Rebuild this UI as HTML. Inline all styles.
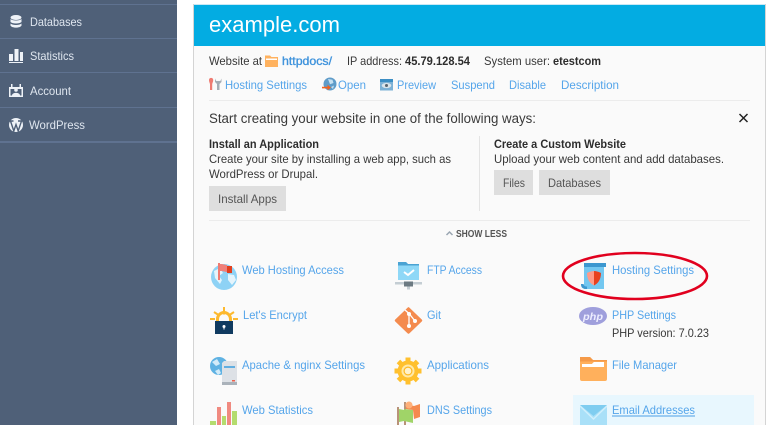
<!DOCTYPE html>
<html><head><meta charset="utf-8"><style>
html,body{margin:0;padding:0;background:#fff;width:774px;height:425px;overflow:hidden}
svg{display:block}
text{font-family:"Liberation Sans",Arial,sans-serif;font-size:12px}
.s{fill:#dfe6ef}
.b{fill:#383838}
.l{fill:#55a5ea}
.h{font-weight:bold;fill:#2d2d2d;font-size:11.5px}
.g{fill:#555}
</style></head><body>
<svg width="774" height="425" viewBox="0 0 774 425" xmlns="http://www.w3.org/2000/svg">
<rect x="0" y="0" width="177" height="425" fill="#4f6078"/>
<g fill="#5f7290"><rect y="4" width="177" height="1"/><rect y="38" width="177" height="1"/><rect y="72" width="177" height="1"/><rect y="107" width="177" height="1"/><rect y="141" width="177" height="2"/></g>
<!-- sidebar icons -->
<g fill="#eef2f7">
<ellipse cx="16" cy="17.500" rx="5.500" ry="2.500"/><path d="M10.500 19c2 2 9 2 11 0v3c-2 2-9 2-11 0z"/><path d="M10.500 23.500c2 2 9 2 11 0v2c-1 2.800-10 2.800-11 0z"/>
<rect x="9" y="54" width="4" height="7"/><rect x="14.500" y="49" width="4" height="12"/><rect x="20" y="52" width="3" height="9"/><rect x="9" y="62" width="14" height="1"/>
<path fill-rule="evenodd" d="M9 87h14v10H9zM10.500 89v6.500h11V89z"/><rect x="11" y="84" width="1.500" height="4"/><rect x="19.500" y="84" width="1.500" height="4"/><circle cx="16" cy="90" r="1.800"/><path d="M12 95.500c0-3.500 8-3.500 8 0z"/>
</g>
<circle cx="16" cy="125" r="7" fill="#eef2f7"/>
<path d="M10.500 121l3.300 10 2.200-6.500 2.200 6.500 3.300-10M9.500 121h4M18 121h4" stroke="#4f6078" stroke-width="1.400" fill="none"/>
<text class="s" lengthAdjust="spacingAndGlyphs" x="30" y="26" textLength="52">Databases</text>
<text class="s" lengthAdjust="spacingAndGlyphs" x="30" y="60" textLength="44">Statistics</text>
<text class="s" lengthAdjust="spacingAndGlyphs" x="30" y="95" textLength="41">Account</text>
<text class="s" lengthAdjust="spacingAndGlyphs" x="29" y="129" textLength="56">WordPress</text>
<!-- panel -->
<rect x="193" y="4" width="573" height="425" fill="#d4d4d4"/>
<rect x="194" y="5" width="571" height="420" fill="#fafafa"/>
<rect x="194" y="4" width="571" height="1" fill="#c8e8f5"/>
<rect x="194" y="5" width="571" height="41" fill="#03ace2"/>
<text lengthAdjust="spacingAndGlyphs" x="209" y="32" style="font-size:22px" fill="#fff" textLength="131">example.com</text>
<text class="b" lengthAdjust="spacingAndGlyphs" x="209" y="65" textLength="53">Website at</text>
<path d="M265 55.500h5l1.500 1.500h6.500v10h-13z" fill="#ffb25f"/><rect x="266" y="58.500" width="11" height="1.500" fill="#fff"/>
<text class="l" lengthAdjust="spacingAndGlyphs" x="282" y="65" textLength="50" style="fill:#3f93dc;stroke:#3f93dc;stroke-width:.35">httpdocs/</text>
<text class="b" lengthAdjust="spacingAndGlyphs" x="347" y="65" textLength="55">IP address:</text>
<text class="h" lengthAdjust="spacingAndGlyphs" x="405" y="65" textLength="65">45.79.128.54</text>
<text class="b" lengthAdjust="spacingAndGlyphs" x="484" y="65" textLength="66">System user:</text>
<text class="h" lengthAdjust="spacingAndGlyphs" x="553" y="65" textLength="48">etestcom</text>
<!-- toolbar icons -->
<path d="M209 80c0-2.800 4.200-2.800 4.200 0 0 2.200-1 3-1 4.500v5.500h-2.200v-5.500c0-1.500-1-2.300-1-4.500z" fill="#ef7b72"/>
<path d="M215 78.500v3.500l2 2v6h2.500v-6l2-2v-3.500l-1.200 2.500h-4.100z" fill="#a5adb5"/>
<circle cx="330" cy="84" r="6.500" fill="#5f9cc9"/><path d="M328 79l4.500.8 1 3.200-3.500 1.200zM331 87l3-1.500-1 3.500z" fill="#c6e1f2"/>
<path d="M322 86.800h5.500v-2l3.500 2.800-3.500 2.800v-2H322z" fill="#f2621e"/>
<rect x="380" y="79" width="13" height="11.500" fill="#7cb1d6"/><rect x="380" y="79" width="13" height="3" fill="#3c8ec4"/>
<ellipse cx="386.500" cy="85.500" rx="4.800" ry="2.600" fill="#dbe4ea"/><circle cx="386.500" cy="85.500" r="1.500" fill="#58646e"/>
<text class="l" lengthAdjust="spacingAndGlyphs" x="225" y="89" textLength="82">Hosting Settings</text>
<text class="l" lengthAdjust="spacingAndGlyphs" x="338" y="89" textLength="28">Open</text>
<text class="l" lengthAdjust="spacingAndGlyphs" x="397" y="89" textLength="39">Preview</text>
<text class="l" lengthAdjust="spacingAndGlyphs" x="451" y="89" textLength="44">Suspend</text>
<text class="l" lengthAdjust="spacingAndGlyphs" x="509" y="89" textLength="37">Disable</text>
<text class="l" lengthAdjust="spacingAndGlyphs" x="561" y="89" textLength="58">Description</text>
<rect x="209" y="100" width="541" height="1" fill="#ececec"/>
<text lengthAdjust="spacingAndGlyphs" x="209" y="123" style="font-size:13.500px" fill="#3a3a3a" textLength="327">Start creating your website in one of the following ways:</text>
<path d="M739.500 114l8 8m0-8l-8 8" stroke="#222" stroke-width="1.500"/>
<text class="h" lengthAdjust="spacingAndGlyphs" x="209" y="148" textLength="110">Install an Application</text>
<text class="b" lengthAdjust="spacingAndGlyphs" x="209" y="163" textLength="242">Create your site by installing a web app, such as</text>
<text class="b" lengthAdjust="spacingAndGlyphs" x="209" y="178" textLength="109">WordPress or Drupal.</text>
<rect x="209" y="186" width="77" height="25" fill="#dedede"/>
<text class="g" lengthAdjust="spacingAndGlyphs" x="218" y="203" textLength="59">Install Apps</text>
<rect x="479" y="136" width="1" height="75" fill="#e4e4e4"/>
<text class="h" lengthAdjust="spacingAndGlyphs" x="494" y="148" textLength="132">Create a Custom Website</text>
<text class="b" lengthAdjust="spacingAndGlyphs" x="494" y="163" textLength="230">Upload your web content and add databases.</text>
<rect x="494" y="170" width="39" height="25" fill="#dedede"/>
<text class="g" lengthAdjust="spacingAndGlyphs" x="503" y="187" textLength="22">Files</text>
<rect x="539" y="170" width="71" height="25" fill="#dedede"/>
<text class="g" lengthAdjust="spacingAndGlyphs" x="548" y="187" textLength="53">Databases</text>
<rect x="209" y="220" width="541" height="1" fill="#ececec"/>
<path d="M446.500 235l3-3 3 3" stroke="#9aa6b2" stroke-width="1.500" fill="none"/>
<text lengthAdjust="spacingAndGlyphs" x="456" y="237" style="font-size:10px;font-weight:bold" fill="#555" textLength="51">SHOW LESS</text>
<!-- email highlight -->
<rect x="573" y="395" width="181" height="30" fill="#e8f7fe"/>
<!-- web hosting access -->
<circle cx="224" cy="277" r="13" fill="#8ed2f5"/>
<path d="M214 271l6-3 3 5-4 3 3 4-2 4-5-6zM228 274l6 1 2 5-4 5-4-5z" fill="#e4f4fc"/>
<rect x="218" y="263" width="2" height="17" fill="#ef7b72"/><path d="M220 264c4 0 5 1 7 1v7c-2 0-3-1-7-1z" fill="#f0807a"/><path d="M227 266h5v7h-5z" fill="#e2401f"/>
<!-- ftp -->
<path d="M398 262h8l2 2h11v16h-21z" fill="#8fd8f7"/><path d="M398 262h8l2 2h11v1.500h-21z" fill="#4ba3d3"/>
<path d="M404 272l4 3 6-5" stroke="#fff" stroke-width="2" fill="none"/>
<rect x="395" y="282" width="27" height="2.500" fill="#c4cdd3"/><rect x="404" y="281.500" width="9" height="5" fill="#6c7a82"/><rect x="407" y="286.500" width="3" height="3" fill="#c4cdd3"/>
<!-- hosting settings -->
<rect x="584" y="265" width="20" height="24" fill="#73c7f0"/>
<rect x="584" y="263" width="22" height="4" fill="#3c97cf"/>
<path d="M581 284c0 4 2 5 6 5v-2.500c-2 0-3-.5-3.500-2.500z" fill="#3c97cf"/>
<path d="M587 273c3-1.500 5-2 7-2v14.500c-4-2-7-6-7-12.500z" fill="#ff9a88"/><path d="M594 271c2 0 4 .5 7 2 0 6.500-3 10.500-7 12.500z" fill="#e8411f"/>
<!-- lets encrypt -->
<g stroke="#fdb92e" fill="none"><path d="M224 307v7.500M214 312l4.500 3M234 312l-4.500 3M210 319h5M233 319h5" stroke-width="2"/><path d="M217.500 322v-3a6.500 6.500 0 0 1 13 0v3" stroke-width="3"/></g>
<rect x="215" y="321" width="18" height="13" fill="#103a60"/><circle cx="224" cy="326.500" r="1.500" fill="#fff"/><rect x="223.500" y="326.500" width="1" height="3" fill="#fff"/>
<!-- git -->
<path d="M408.500 308.500l12.500 12-12.500 12-12.500-12z" fill="#f48b4e" stroke="#f48b4e" stroke-width="2.500" stroke-linejoin="round"/>
<path d="M405 310l4 3.500 6 7.500M409 313.500V326" stroke="#fff" stroke-width="1.300" fill="none"/><circle cx="409" cy="326" r="2" fill="#fff"/><circle cx="415" cy="321" r="2" fill="#fff"/><circle cx="409" cy="314" r="2" fill="#fff"/>
<!-- php -->
<ellipse cx="593" cy="316" rx="14" ry="9" fill="#9f9fdc"/>
<text lengthAdjust="spacingAndGlyphs" x="583" y="320" style="font-size:10px;font-weight:bold;font-style:italic" fill="#eef" textLength="20">php</text>
<!-- apache -->
<circle cx="219" cy="366" r="9" fill="#5fb2e3"/><path d="M212 362l5-3 3 5-4 2zM215 371l4-2 2 4-3 2z" fill="#d2ebf9"/>
<path d="M224 361h13v24h-15v-22z" fill="#dde1e6"/><rect x="222" y="382" width="15" height="3" fill="#aab2ba"/><rect x="224" y="366" width="11" height="2" fill="#62aee0"/><rect x="232" y="380" width="3" height="1.500" fill="#f0604a"/>
<!-- applications -->
<g transform="translate(408 371)"><circle r="10.500" fill="#ffc02e"/><g fill="#ffc02e"><rect x="-2.500" y="-13.500" width="5" height="27"/><rect x="-13.500" y="-2.500" width="27" height="5"/><rect x="-2.500" y="-13.500" width="5" height="27" transform="rotate(45)"/><rect x="-2.500" y="-13.500" width="5" height="27" transform="rotate(-45)"/></g><circle r="6.500" fill="#ffe9a8"/><circle r="4.500" fill="#ffb820"/><circle r="3.300" fill="#fff2cc"/></g>
<!-- file manager -->
<path d="M580 357h10l3 3h14v19a2 2 0 0 1-2 2h-23a2 2 0 0 1-2-2z" fill="#ffb05c"/><path d="M582 367v-3h10l2-2h10v5z" fill="#fff"/><path d="M580 357h10l3 3h14v1.500h-27z" fill="#f59a48"/><path d="M582 364h10l2-2h10v5h-22z" fill="#fff"/>
<!-- stats -->
<rect x="210" y="421" width="6" height="4" fill="#b4dc6e"/><rect x="217" y="407" width="4" height="18" fill="#f08a80"/><rect x="222" y="416" width="4" height="9" fill="#b4dc6e"/><rect x="227" y="402" width="4" height="23" fill="#f08a80"/><rect x="232" y="411" width="5" height="14" fill="#b4dc6e"/>
<!-- dns -->
<rect x="397" y="407" width="2" height="18" fill="#b89278"/><rect x="404" y="402" width="2" height="23" fill="#b89278"/>
<path d="M399 409l5 1v-1l9 1v13l-9-2-5 1z" fill="#a0d468"/><path d="M406 404l8 2 6-2v13l-6 2-1-9-7-1z" fill="#f58a4e"/><circle cx="409" cy="405" r="3.500" fill="#ffb07a"/>
<!-- mail -->
<rect x="580" y="405" width="27" height="20" fill="#a9e0f8"/><path d="M580 405l13.500 11L607 405z" fill="#7fcdf0"/><path d="M580 405l13.500 13L607 405v2l-13.500 13L580 407z" fill="#d0effc"/>
<text class="l" lengthAdjust="spacingAndGlyphs" x="242" y="274" textLength="102">Web Hosting Access</text>
<text class="l" lengthAdjust="spacingAndGlyphs" x="427" y="274" textLength="55">FTP Access</text>
<text class="l" lengthAdjust="spacingAndGlyphs" x="612" y="274" textLength="82">Hosting Settings</text>
<text class="l" lengthAdjust="spacingAndGlyphs" x="243" y="319" textLength="64">Let's Encrypt</text>
<text class="l" lengthAdjust="spacingAndGlyphs" x="427" y="319" textLength="14">Git</text>
<text class="l" lengthAdjust="spacingAndGlyphs" x="612" y="319" textLength="64">PHP Settings</text>
<text class="b" lengthAdjust="spacingAndGlyphs" x="612" y="337" textLength="97">PHP version: 7.0.23</text>
<text class="l" lengthAdjust="spacingAndGlyphs" x="242" y="369" textLength="123">Apache &amp; nginx Settings</text>
<text class="l" lengthAdjust="spacingAndGlyphs" x="427" y="369" textLength="62">Applications</text>
<text class="l" lengthAdjust="spacingAndGlyphs" x="612" y="369" textLength="65">File Manager</text>
<text class="l" lengthAdjust="spacingAndGlyphs" x="242" y="414" textLength="71">Web Statistics</text>
<text class="l" lengthAdjust="spacingAndGlyphs" x="427" y="414" textLength="65">DNS Settings</text>
<text class="l" lengthAdjust="spacingAndGlyphs" x="612" y="414" textLength="83">Email Addresses</text>
<rect x="612" y="415.500" width="83" height="1" fill="#4d9fe6"/>
<ellipse cx="635" cy="276" rx="72" ry="23" fill="none" stroke="#e1001e" stroke-width="2.600"/>
</svg>
</body></html>
